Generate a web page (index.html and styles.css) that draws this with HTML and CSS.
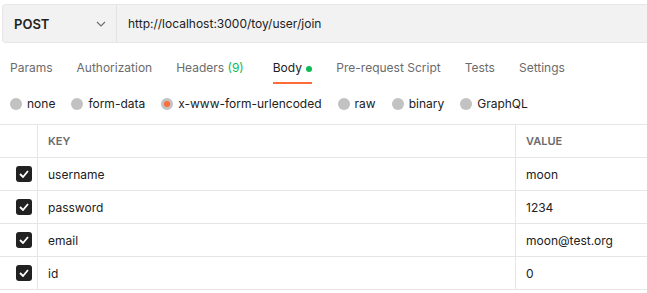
FILE: index.html
```html
<!DOCTYPE html>
<html lang="en">
<head>
    <meta charset="UTF-8">
    <title>Request</title>
    <link rel="stylesheet" href="styles.css">
</head>
<body>

<div class="request">
    <div class="method">
        <span>POST</span>
        <svg class="chevron" width="10" height="6" viewBox="0 0 10 6"><path d="M1 1l4 4 4-4" fill="none" stroke="#6b6b6b" stroke-width="1.1"/></svg>
    </div>
    <div class="url">http://localhost:3000/toy/user/join</div>
</div>

<div class="tabs">
    <div class="tab">Params</div>
    <div class="tab">Authorization</div>
    <div class="tab">Headers <span class="count">(9)</span></div>
    <div class="tab active">Body <span class="dot"></span></div>
    <div class="tab">Pre-request Script</div>
    <div class="tab">Tests</div>
    <div class="tab">Settings</div>
</div>

<div class="modes">
    <label class="mode"><span class="radio"></span>none</label>
    <label class="mode"><span class="radio"></span>form-data</label>
    <label class="mode"><span class="radio checked"></span>x-www-form-urlencoded</label>
    <label class="mode"><span class="radio"></span>raw</label>
    <label class="mode"><span class="radio"></span>binary</label>
    <label class="mode"><span class="radio"></span>GraphQL</label>
</div>

<div class="params">
    <div class="cell check"></div>
    <div class="cell head">KEY</div>
    <div class="cell head">VALUE</div>

    <div class="cell check"><span class="box"><svg width="10" height="8" viewBox="0 0 10 8"><path d="M1 4l3 3 5-6" fill="none" stroke="#fff" stroke-width="1.8"/></svg></span></div>
    <div class="cell">username</div>
    <div class="cell">moon</div>

    <div class="cell check"><span class="box"><svg width="10" height="8" viewBox="0 0 10 8"><path d="M1 4l3 3 5-6" fill="none" stroke="#fff" stroke-width="1.8"/></svg></span></div>
    <div class="cell">password</div>
    <div class="cell">1234</div>

    <div class="cell check"><span class="box"><svg width="10" height="8" viewBox="0 0 10 8"><path d="M1 4l3 3 5-6" fill="none" stroke="#fff" stroke-width="1.8"/></svg></span></div>
    <div class="cell">email</div>
    <div class="cell">moon@test.org</div>

    <div class="cell check"><span class="box"><svg width="10" height="8" viewBox="0 0 10 8"><path d="M1 4l3 3 5-6" fill="none" stroke="#fff" stroke-width="1.8"/></svg></span></div>
    <div class="cell">id</div>
    <div class="cell">0</div>
</div>

</body>
</html>
```

FILE: styles.css
```css
body {
    font-family: Inter, "Noto Sans", sans-serif;
    font-size: 12px;
    color: #212121;
    background: #fff;
    margin: 0;
    overflow: hidden;
}
.request {
    display: flex;
    height: 37px;
    margin: 4px 0 0 2px;
    background: #f2f2f2;
    border: 1px solid #e6e6e6;
    border-right: none;
    border-radius: 4px 0 0 4px;
}
.method {
    display: flex;
    align-items: center;
    justify-content: space-between;
    width: 114px;
    padding: 0 10px 0 11px;
    box-sizing: border-box;
    font-size: 13px;
    font-weight: 600;
    border-right: 1px solid #e2e2e2;
}
.chevron {
    margin-top: 1px;
}
.url {
    display: flex;
    align-items: center;
    padding-left: 11px;
}
.tabs {
    display: flex;
    gap: 24px;
    margin-top: 15px;
    padding-left: 10px;
}
.tab {
    line-height: 20px;
    padding-bottom: 4px;
    border-bottom: 2px solid transparent;
    color: #6b6b6b;
    white-space: nowrap;
}
.tab.active {
    margin-left: 5px;
    color: #212121;
    border-bottom-color: #ff6c37;
}
.count {
    color: #0cbb52;
}
.dot {
    display: inline-block;
    width: 6px;
    height: 6px;
    border-radius: 50%;
    background: #0cbb52;
    vertical-align: middle;
    margin-left: 1px;
}
.modes {
    display: flex;
    gap: 16px;
    margin-top: 10px;
    padding-left: 10px;
    line-height: 20px;
}
.mode {
    display: flex;
    align-items: center;
    gap: 5px;
}
.radio {
    width: 12px;
    height: 12px;
    border-radius: 50%;
    background: #c2c2c2;
    box-sizing: border-box;
}
.radio.checked {
    border: 3px solid #c2c2c2;
    background: #ff6c37;
}
.params {
    display: grid;
    grid-template-columns: 38px 478px 1fr;
    margin-top: 10px;
    border-top: 1px solid #e6e6e6;
}
.cell {
    display: flex;
    align-items: center;
    height: 32px;
    padding-left: 10px;
    border-bottom: 1px solid #e6e6e6;
    border-right: 1px solid #e6e6e6;
    white-space: nowrap;
}
.cell:nth-child(3n) {
    border-right: none;
}
.head {
    font-size: 11px;
    font-weight: 600;
    color: #6b6b6b;
}
.check {
    justify-content: flex-end;
    padding: 0 5px 0 0;
}
.box {
    display: flex;
    align-items: center;
    justify-content: center;
    width: 16px;
    height: 16px;
    border-radius: 3px;
    background: #212121;
}
```
